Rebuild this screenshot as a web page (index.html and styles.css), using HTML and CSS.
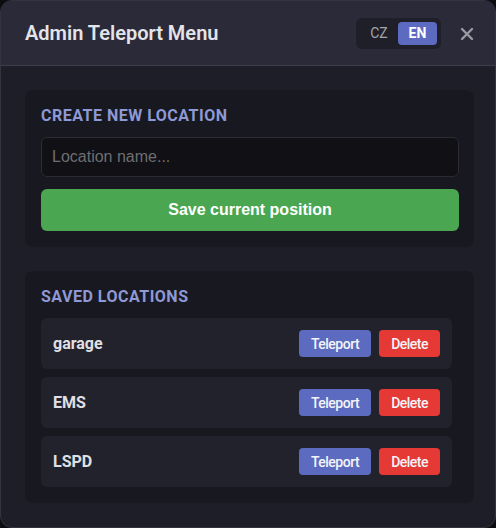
FILE: index.html
```html
<!DOCTYPE html>
<html lang="en">
<head>
<meta charset="utf-8">
<title>Admin Teleport Menu</title>
<link rel="stylesheet" href="styles.css">
</head>
<body>
<div class="window">
  <header class="header">
    <h1 class="title">Admin Teleport Menu</h1>
    <div class="header-actions">
      <div class="lang">
        <button class="lang-btn">CZ</button>
        <button class="lang-btn active">EN</button>
      </div>
      <button class="close" aria-label="Close">
        <svg width="14" height="14" viewBox="0 0 14 14"><path d="M2 2 L12 12 M12 2 L2 12" stroke="#9a9aa2" stroke-width="2.4" stroke-linecap="round"/></svg>
      </button>
    </div>
  </header>
  <main class="content">
    <section class="card">
      <h2 class="card-title">CREATE NEW LOCATION</h2>
      <input class="name-input" type="text" placeholder="Location name...">
      <button class="save-btn">Save current position</button>
    </section>
    <section class="card">
      <h2 class="card-title">SAVED LOCATIONS</h2>
      <div class="list">
        <div class="row">
          <span class="loc-name">garage</span>
          <div class="row-actions">
            <button class="btn btn-tp">Teleport</button>
            <button class="btn btn-del">Delete</button>
          </div>
        </div>
        <div class="row">
          <span class="loc-name">EMS</span>
          <div class="row-actions">
            <button class="btn btn-tp">Teleport</button>
            <button class="btn btn-del">Delete</button>
          </div>
        </div>
        <div class="row">
          <span class="loc-name">LSPD</span>
          <div class="row-actions">
            <button class="btn btn-tp">Teleport</button>
            <button class="btn btn-del">Delete</button>
          </div>
        </div>
      </div>
    </section>
  </main>
</div>
</body>
</html>
```

FILE: styles.css
```css
* { box-sizing: border-box; }
html, body { margin: 0; padding: 0; }
body {
  background: #0d0d11;
  font-family: Roboto, "Liberation Sans", sans-serif;
  width: 496px;
  height: 528px;
}
.window {
  width: 496px;
  height: 528px;
  background: #1e1e29;
  border: 1px solid #34343f;
  border-radius: 12px;
  overflow: hidden;
  display: flex;
  flex-direction: column;
}
.header {
  height: 65px;
  flex: none;
  background: #2a2a39;
  border-bottom: 1px solid #3c3c4a;
  display: flex;
  align-items: center;
  justify-content: space-between;
  padding: 0 20px 0 24px;
}
.title {
  margin: 0;
  font-size: 20px;
  font-weight: 600;
  color: #e4e4e8;
}
.header-actions {
  display: flex;
  align-items: center;
  gap: 18px;
}
.lang {
  display: flex;
  background: #1f1f29;
  border-radius: 6px;
  padding: 4px;
}
.lang-btn {
  border: 0;
  background: transparent;
  color: #a4a4aa;
  font-family: Roboto, "Liberation Sans", sans-serif;
  font-size: 14px;
  height: 23px;
  width: 38px;
  padding: 0;
  border-radius: 4px;
}
.lang-btn.active {
  background: #5c6bc0;
  color: #ffffff;
  font-weight: 700;
  width: 39px;
}
.close {
  border: 0;
  background: transparent;
  padding: 0 1px;
  display: flex;
  align-items: center;
  margin-top: 1px;
}
.content {
  flex: 1;
  padding: 24px 21px 24px 24px;
  display: flex;
  flex-direction: column;
  gap: 24px;
}
.card {
  background: #181820;
  border-radius: 8px;
  padding: 16px 15px 16px 16px;
}
.card-title {
  margin: 0 0 12px;
  font-size: 16px;
  font-weight: 700;
  color: #8e99d6;
  letter-spacing: 0.5px;
}
.name-input {
  display: block;
  width: 100%;
  height: 40px;
  background: #101015;
  border: 1px solid #2b2b34;
  border-radius: 6px;
  padding: 0 10px;
  font-family: "Liberation Sans", Arial, sans-serif;
  font-size: 16px;
  color: #ddd;
  margin-bottom: 12px;
}
.name-input::placeholder { color: #6e6e72; }
.save-btn {
  display: block;
  width: 100%;
  height: 42px;
  border: 0;
  border-radius: 6px;
  background: #4aa651;
  color: #ffffff;
  font-family: "Liberation Sans", Arial, sans-serif;
  font-weight: 700;
  font-size: 16px;
}
.list {
  display: flex;
  flex-direction: column;
  gap: 8px;
  padding-right: 7px;
}
.row {
  display: flex;
  align-items: center;
  justify-content: space-between;
  background: #22222c;
  border-radius: 6px;
  padding: 12px;
}
.loc-name {
  font-size: 16px;
  font-weight: 700;
  color: #e0e0e4;
}
.row-actions {
  display: flex;
  gap: 8px;
}
.btn {
  height: 27px;
  border: 0;
  border-radius: 4px;
  padding: 0 12px;
  color: #f4f4f8;
  font-family: Roboto, "Liberation Sans", sans-serif;
  font-size: 14px;
  font-weight: 500;
  letter-spacing: -0.5px;
}
.btn-tp { background: #5c6bc0; }
.btn-del { background: #e53935; }
```
